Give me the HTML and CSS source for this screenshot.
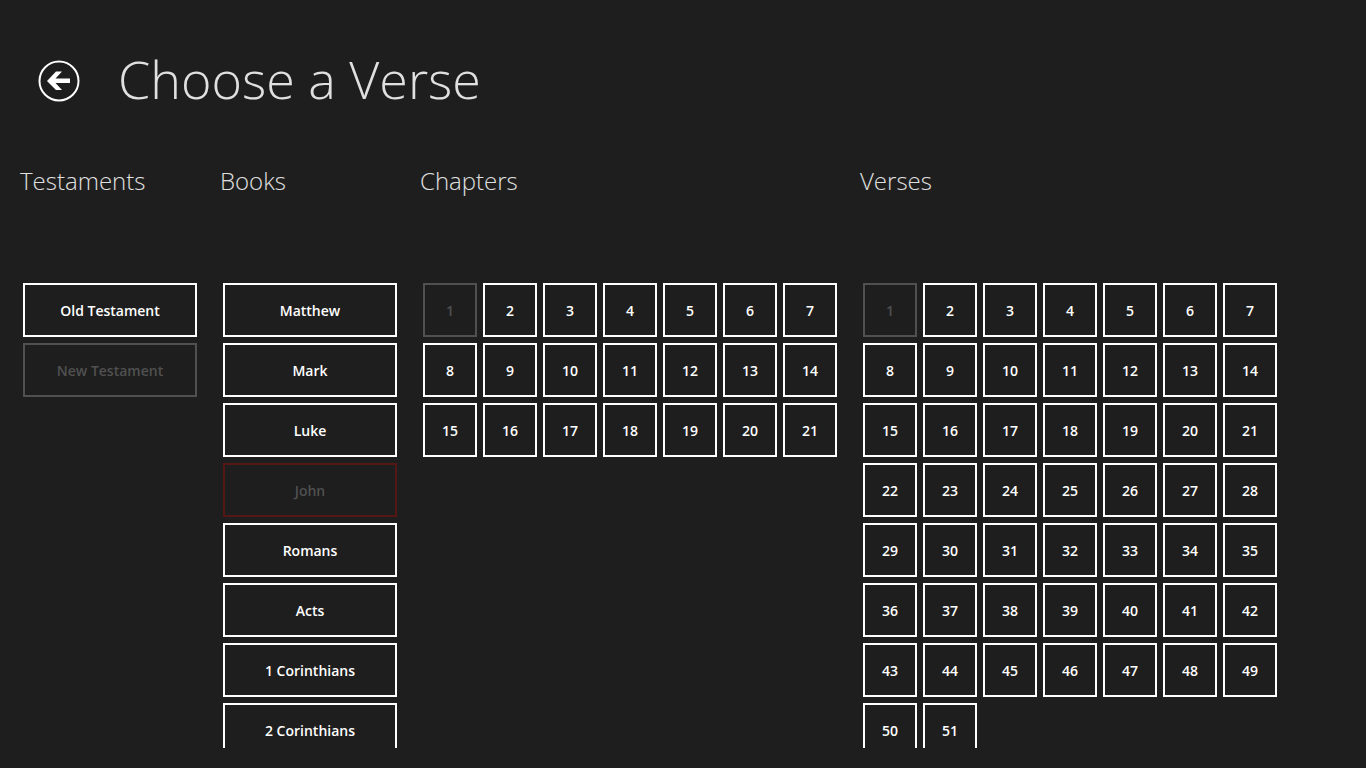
FILE: index.html
```
<!DOCTYPE html>
<html lang="en"><head><meta charset="utf-8">
<title>Choose a Verse</title>
<link rel="stylesheet" href="styles.css">
</head><body>

<header class="top">
	<button class="back" type="button" aria-label="Back">
		<svg viewBox="0 0 42 42" width="42" height="42">
			<circle cx="21" cy="21" r="19.5" fill="none" stroke="#fff" stroke-width="2"/>
			<path d="M9 21L18 11.5H24L17.5 18.5H32V23H17.5L24 30H18Z" fill="#fff"/>
		</svg>
	</button>
	<h1>Choose a Verse</h1>
</header>

<main class="columns">
	<section class="column">
		<h2>Testaments</h2>
		<div class="list">
			<button type="button">Old Testament</button>
			<button type="button" disabled>New Testament</button>
		</div>
	</section>
	<section class="column">
		<h2>Books</h2>
		<div class="list">
			<button type="button">Matthew</button>
			<button type="button">Mark</button>
			<button type="button">Luke</button>
			<button type="button" class="current" disabled>John</button>
			<button type="button">Romans</button>
			<button type="button">Acts</button>
			<button type="button">1 Corinthians</button>
			<button type="button">2 Corinthians</button>
		</div>
	</section>
	<section class="column">
		<h2>Chapters</h2>
		<div class="list numbers" id="chapters"></div>
	</section>
	<section class="column">
		<h2>Verses</h2>
		<div class="list numbers" id="verses"></div>
	</section>
</main>

<script src="verses.js"></script>
</body></html>
```
FILE: styles.css
```
* {
	box-sizing: border-box;
}
body {
	display: flex;
	flex-direction: column;
	height: 100vh;
	margin: 0;
	padding: 0 20px 20px;
	background: #1e1e1e;
	color: #e0e0e0;
	font-family: "Open Sans", "Noto Sans", sans-serif;
	overflow: hidden;
}
h1, h2 {
	margin: 0;
	font-weight: 300;
}
.top {
	display: flex;
	align-items: center;
	gap: 38px;
	height: 160px;
	padding: 2px 0 0 18px;
}
.top h1 {
	padding-bottom: 4px;
	font-size: 52px;
	line-height: 72px;
}
.back {
	width: 42px;
	height: 42px;
	padding: 0;
	border: none;
	background: none;
}
.back svg {
	display: block;
}
.columns {
	display: flex;
	flex: 1;
	gap: 20px;
	min-height: 0;
}
.column {
	display: flex;
	flex-direction: column;
	min-height: 0;
}
.column h2 {
	height: 120px;
	font-size: 24px;
	line-height: 42px;
}
.list {
	display: grid;
	grid-template-columns: 180px;
	grid-auto-rows: 60px;
	flex: 1;
	min-height: 0;
	overflow: hidden;
}
.numbers {
	grid-template-columns: repeat(7, 60px);
}
.list button {
	margin: 3px;
	padding: 0;
	border: 2px solid #fff;
	background: none;
	color: #fff;
	font-family: inherit;
	font-size: 14px;
	font-weight: 600;
}
.list button:disabled {
	border-color: #505050;
	color: #505050;
}
.list .current:disabled {
	border-color: #551616;
}
```
FILE: verses.js
```
function fillNumbers(id, count, selected) {
	const list = document.getElementById(id);
	for (let i = 1; i <= count; i++) {
		const button = document.createElement("button");
		button.type = "button";
		button.textContent = i;
		button.disabled = i === selected;
		list.appendChild(button);
	}
}

fillNumbers("chapters", 21, 1);
fillNumbers("verses", 51, 1);
```
